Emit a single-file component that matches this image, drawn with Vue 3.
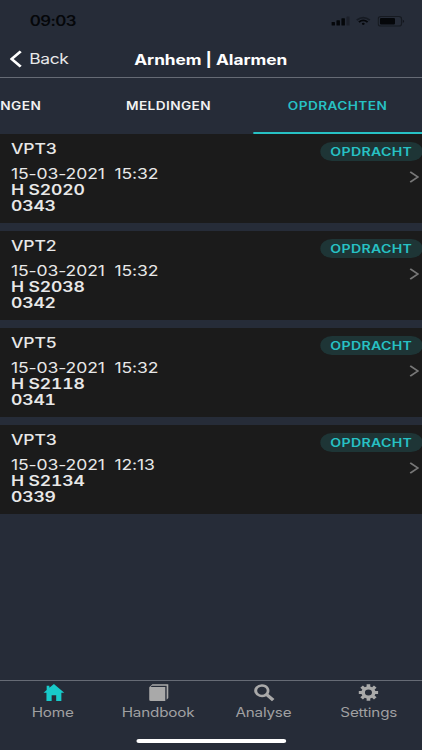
<template>
  <div class="screen">
    <header class="top">
      <div class="status">
        <span class="clock">09:03</span>
        <div class="indicators">
          <svg class="signal" viewBox="0 0 16 10">
            <rect x="0" y="6.2" width="3" height="3.8" rx="0.6" />
            <rect x="4.3" y="4.4" width="3" height="5.6" rx="0.6" />
            <rect x="8.6" y="2.4" width="3" height="7.6" rx="0.6" />
            <rect x="13" y="0.6" width="3" height="9.4" rx="0.6" opacity="0.3" />
          </svg>
          <svg class="wifi" viewBox="0 0 14 10">
            <path d="M1 4Q7 -1.4 13 4" opacity="0.45" />
            <path d="M3 6.2Q7 2.4 11 6.2" />
            <circle cx="7" cy="8.2" r="1.3" />
          </svg>
          <svg class="battery" viewBox="0 0 23 11">
            <rect class="shell" x="0.5" y="0.5" width="19.6" height="9.6" rx="2.4" />
            <rect x="2" y="2" width="12.6" height="6.6" rx="1" />
            <path d="M21.2 3.6Q23.6 5.3 21.2 7z" opacity="0.6" />
          </svg>
        </div>
      </div>
      <div class="nav">
        <button class="back">
          <svg viewBox="0 0 10 18"><path d="M9 1.4L1.6 9L9 16.6" /></svg>
          <span>Back</span>
        </button>
        <h1>Arnhem | Alarmen</h1>
      </div>
    </header>

    <div class="tabs">
      <button
        v-for="tab in tabs"
        :key="tab"
        class="tab"
        :class="{ active: tab === activeTab }"
        @click="activeTab = tab"
      >
        {{ tab }}
      </button>
    </div>

    <main class="list">
      <article v-for="alarm in alarms" :key="alarm.number" class="card">
        <div class="info">
          <p class="unit">{{ alarm.unit }}</p>
          <p class="date">{{ alarm.date }}&nbsp; {{ alarm.time }}</p>
          <p class="bold">{{ alarm.place }}</p>
          <p class="bold">{{ alarm.number }}</p>
        </div>
        <div class="side">
          <span class="badge">OPDRACHT</span>
          <svg class="chevron" viewBox="0 0 8 12"><path d="M0.8 0.8L7 6L0.8 11.2" /></svg>
        </div>
      </article>
    </main>

    <footer class="bottom">
      <button
        v-for="item in menu"
        :key="item.label"
        class="item"
        :class="{ current: item.label === page }"
        @click="page = item.label"
      >
        <svg viewBox="0 0 20 20" preserveAspectRatio="none">
          <path :d="item.icon" fill-rule="evenodd" />
        </svg>
        <span>{{ item.label }}</span>
      </button>
    </footer>
    <div class="home-bar"></div>
  </div>
</template>

<script setup>
import { ref } from "vue";

const tabs = ["STORINGEN", "MELDINGEN", "OPDRACHTEN"];
const activeTab = ref("OPDRACHTEN");
const page = ref("Home");

const alarms = [
  { unit: "VPT3", date: "15-03-2021", time: "15:32", place: "H S2020", number: "0343" },
  { unit: "VPT2", date: "15-03-2021", time: "15:32", place: "H S2038", number: "0342" },
  { unit: "VPT5", date: "15-03-2021", time: "15:32", place: "H S2118", number: "0341" },
  { unit: "VPT3", date: "15-03-2021", time: "12:13", place: "H S2134", number: "0339" },
];

// gear with eight teeth around a round hole
function gearPath() {
  const points = [];
  for (let i = 0; i < 8; i++) {
    const mid = (i * Math.PI) / 4;
    [[-0.25, 6.9], [-0.19, 9.5], [0.19, 9.5], [0.25, 6.9]].forEach(([offset, r]) => {
      const x = 10 + r * Math.sin(mid + offset);
      const y = 10 - r * 0.93 * Math.cos(mid + offset);
      points.push(x.toFixed(2) + " " + y.toFixed(2));
    });
  }
  return "M" + points.join("L") + "ZM10 6.8a3.4 3.2 0 1 0 0 6.4a3.4 3.2 0 1 0 0 -6.4Z";
}

const menu = [
  { label: "Home", icon: "M10.9 1L20.9 10.2H18.1V19H13.1V13H8.7V19H3.7V10.2H0.9L3.9 7.4V3H6.5V5Z" },
  {
    label: "Handbook",
    icon: "M4.8 1.2H20.2V15.8L18.6 17.6V2.8H4.4L3 4.3H17.3V19H3.2Q1.8 19 1.8 17.5V4.4Z",
  },
  {
    label: "Analyse",
    icon: "M8.3 1.2a7.5 6.9 0 1 0 4.1 12.7L18 19.2L20.4 16.9L14.6 11.5A7.5 6.9 0 0 0 8.3 1.2ZM8.3 3.9a4.6 4.2 0 1 1 0 8.4a4.6 4.2 0 1 1 0 -8.4Z",
  },
  { label: "Settings", icon: gearPath() },
];
</script>

<style>
body {
  background: #262c38;
  overflow: hidden;
}
</style>

<style scoped>
/* the whole screen is drawn narrow and widened */
.screen {
  width: 347px;
  height: 750px;
  display: flex;
  flex-direction: column;
  position: relative;
  overflow: hidden;
  background: #262c38;
  color: #e8e8e8;
  font-family: Inter, "Liberation Sans", sans-serif;
  transform: scaleX(1.218);
  transform-origin: 0 0;
}

button {
  border: none;
  background: none;
  padding: 0;
  margin: 0;
  color: inherit;
  font-family: inherit;
}

p,
h1 {
  margin: 0;
}

/* header */
.top {
  height: 78px;
  box-sizing: border-box;
  flex: none;
  border-bottom: 1px solid #666b75;
}

.status {
  height: 42px;
  display: flex;
  justify-content: space-between;
  align-items: center;
  padding: 0 15px 0 24.5px;
  color: #05070a;
}

.clock {
  font-size: 13.8px;
  font-weight: 600;
  letter-spacing: -0.5px;
}

.indicators {
  display: flex;
  align-items: center;
  gap: 5px;
  fill: #05070a;
}

.signal {
  width: 15.5px;
  height: 9.5px;
}

.wifi {
  width: 12.5px;
  height: 10px;
}

.wifi path {
  fill: none;
  stroke: #05070a;
  stroke-width: 1.8;
}

.battery {
  width: 22.5px;
  height: 11px;
}

.shell {
  fill: none;
  stroke: #05070a;
  opacity: 0.5;
}

.nav {
  height: 35px;
  display: flex;
  align-items: center;
  justify-content: center;
  position: relative;
}

.back {
  position: absolute;
  left: 8px;
  top: 8px;
  display: flex;
  align-items: center;
  gap: 6px;
  font-size: 14.3px;
  line-height: 18px;
  letter-spacing: -0.3px;
}

.back svg {
  width: 10px;
  height: 18px;
  fill: none;
  stroke: #fff;
  stroke-width: 2.4;
}

h1 {
  padding-right: 1px;
  font-size: 14.2px;
  line-height: 18px;
  font-weight: 700;
  letter-spacing: -0.04px;
  color: #fff;
}

/* tabs */
.tabs {
  height: 56px;
  flex: none;
  display: flex;
  justify-content: flex-end;
}

.tab {
  flex: none;
  width: 138.8px;
  padding: 2px 1px 0 0;
  border-bottom: 2px solid transparent;
  font-size: 11.2px;
  font-weight: 600;
  letter-spacing: 0.35px;
  color: #f2f2f2;
}

.tab.active {
  color: #27c1c4;
  border-color: #27c1c4;
}

/* alarm cards */
.list {
  flex: 1;
  display: flex;
  flex-direction: column;
  gap: 8px;
}

.card {
  height: 89px;
  flex: none;
  box-sizing: border-box;
  padding: 6px 0 0 9px;
  display: flex;
  justify-content: space-between;
  background: #1b1b1b;
}

.info p {
  font-size: 14.4px;
  line-height: 16.2px;
}

.info .unit {
  font-weight: 500;
  line-height: 18px;
  margin-bottom: 8px;
  letter-spacing: -0.1px;
}

.info .date {
  letter-spacing: -0.08px;
}

.info .bold {
  font-weight: 600;
  font-variant-numeric: tabular-nums;
  letter-spacing: -0.1px;
}

.side {
  display: flex;
  flex-direction: column;
  align-items: flex-end;
  padding-top: 2px;
}

.badge {
  height: 19px;
  box-sizing: border-box;
  width: 84.4px;
  padding-top: 1px;
  border-radius: 9.5px;
  background: #1e3536;
  color: #27c1c4;
  font-size: 11.6px;
  line-height: 18px;
  font-weight: 600;
  letter-spacing: 0.25px;
  text-align: center;
}

.chevron {
  width: 8px;
  height: 12px;
  margin: 10px 3px 0 0;
  fill: none;
  stroke: #777;
  stroke-width: 1.6;
}

/* bottom menu */
.bottom {
  height: 70px;
  box-sizing: border-box;
  flex: none;
  display: flex;
  padding-right: 1px;
  border-top: 1px solid #666b75;
}

.item {
  flex: 1;
  display: flex;
  flex-direction: column;
  align-items: center;
  padding-top: 2px;
  font-size: 12.5px;
  line-height: 16px;
  letter-spacing: -0.15px;
  color: #a0a0a2;
}

.item svg {
  width: 17px;
  height: 19px;
  margin-bottom: 3px;
  fill: #a9a9a9;
  overflow: visible;
}

.item.current svg {
  fill: #18caca;
}

.home-bar {
  position: absolute;
  left: 111.5px;
  bottom: 7px;
  width: 123.5px;
  height: 4px;
  border-radius: 2px;
  background: #fff;
}
</style>
